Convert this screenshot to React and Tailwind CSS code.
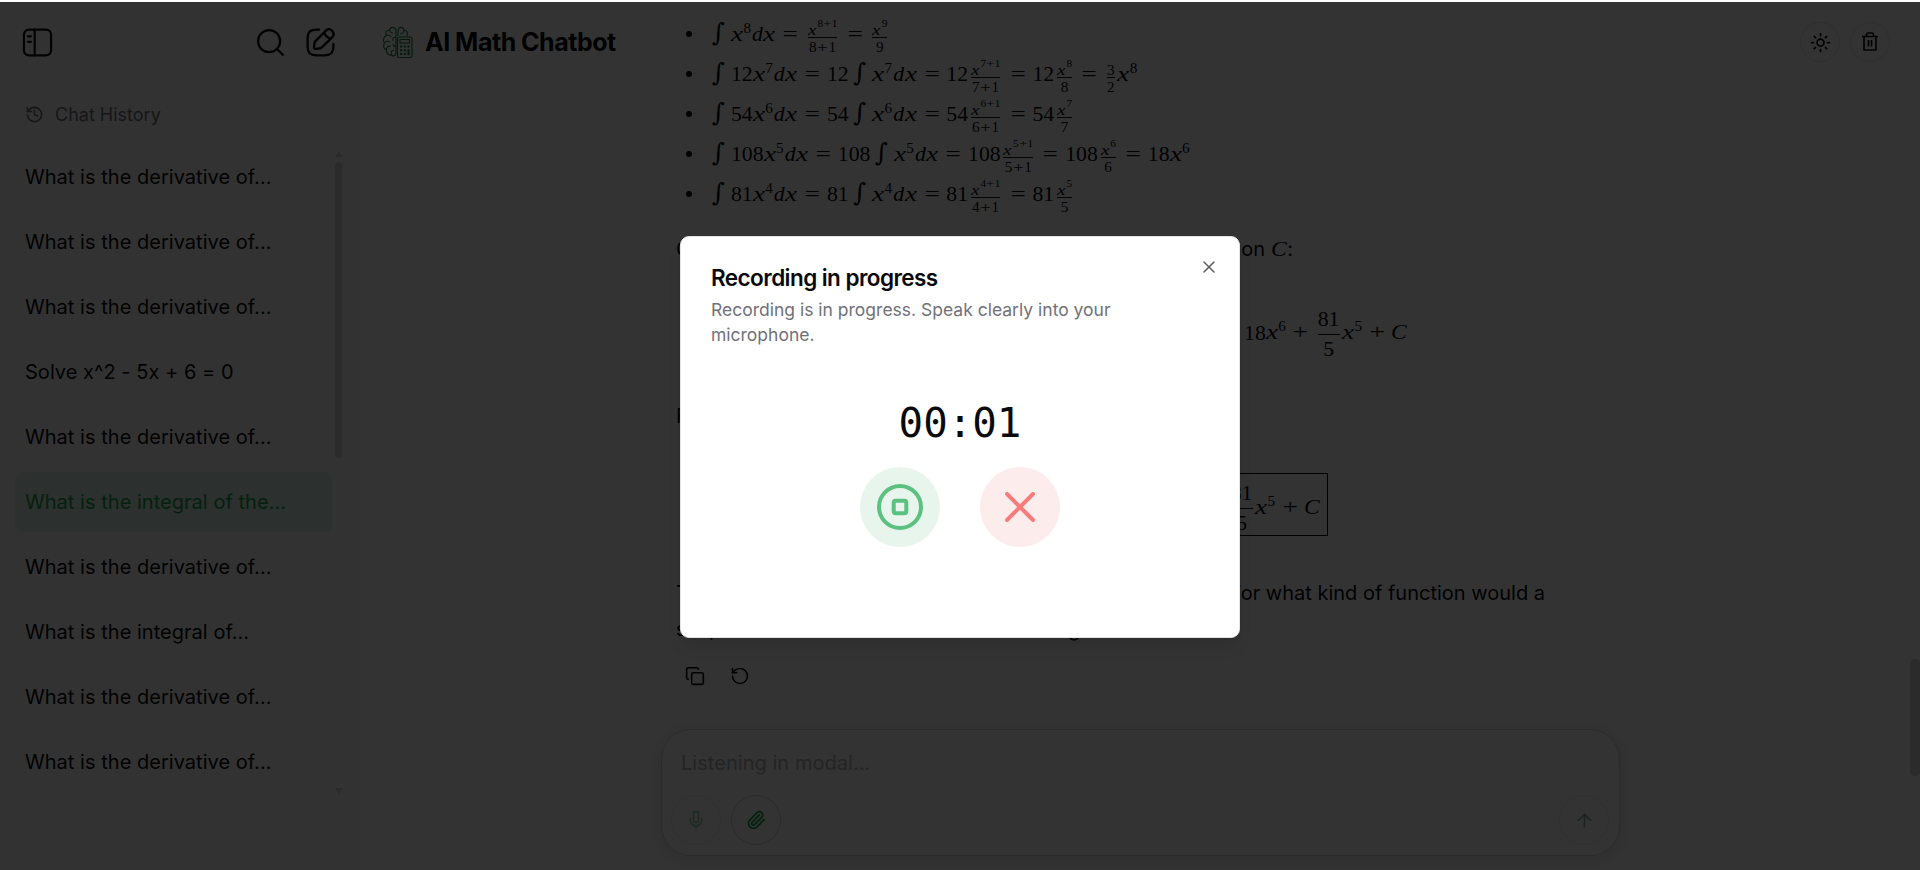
import { useState } from "react";
import { Search, History, Sun, Copy, RotateCcw, Mic, Paperclip, ArrowUp, X } from "lucide-react";

const chats = [
  "What is the derivative of...",
  "What is the derivative of...",
  "What is the derivative of...",
  "Solve x^2 - 5x + 6 = 0",
  "What is the derivative of...",
  "What is the integral of the...",
  "What is the derivative of...",
  "What is the integral of...",
  "What is the derivative of...",
  "What is the derivative of...",
];

function V({ c }) {
  return <i className={c === "x" ? "inline-block w-[0.5715em] origin-left scale-x-[1.25]" : c === "C" ? "inline-block w-[0.76em] origin-left scale-x-[1.08]" : "inline-block w-[0.52em]"}>{c}</i>;
}
function Int() {
  return <span className="inline-block w-[0.87em] text-left font-['DejaVu_Serif'] leading-[0] italic"><span className="inline-block text-[1.15em]">∫</span></span>;
}
function Sup({ children }) {
  return <span className="inline-block pr-[0.07em] align-[0.5em] text-[0.7em] leading-[0]">{children}</span>;
}
function Op({ children }) {
  return <span className="mx-[0.2778em] inline-block w-[0.79em] text-center"><span className="inline-block scale-x-[1.25]">{children}</span></span>;
}
function Sum({ p }) {
  return <>{p}<span className="inline-block w-[0.778em] text-center"><span className="inline-block scale-x-[1.25]">+</span></span>1</>;
}
function Frac({ sup, d, n }) {
  return (
    <span className="mx-[0.18em] inline-flex flex-col items-center align-[0.385em] text-[0.7em] leading-[12px]">
      <span className="flex h-[14px] items-end">
        {n ?? <><V c="x" /><span className="mb-[7px] pl-[0.08em] text-[0.74em] leading-[12px]">{sup}</span></>}
      </span>
      <span className="mt-[1px] h-px w-full bg-[#111]" />
      <span className="mt-px h-[13px] leading-[15px]">{d}</span>
    </span>
  );
}
function DFrac({ n, d }) {
  return (
    <span className="mx-[0.12em] inline-flex h-[56px] flex-col items-center align-[13.5px] leading-[24px]">
      <span className="h-[27px]">{n}</span>
      <span className="h-px w-full bg-[#111]" />
      <span className="h-[28px] leading-[28px]">{d}</span>
    </span>
  );
}
function Dx({ p }) {
  return <><V c="x" /><Sup>{p}</Sup><V c="d" /><V c="x" /></>;
}
function Step({ c, p }) {
  const q = `${p + 1}`;
  return (
    <>
      <Int />{c}<Dx p={p} /><Op>=</Op>
      {c && <>{c}<span className="inline-block w-[0.21em]" /><Int /><Dx p={p} /><Op>=</Op></>}
      {c}<Frac sup={<Sum p={p} />} d={<Sum p={p} />} /><Op>=</Op>{c}<Frac sup={q} d={q} />
      {c === "12" && <><Op>=</Op><Frac n="3" d="2" /><V c="x" /><Sup>8</Sup></>}
    </>
  );
}
function Tail() {
  return <><DFrac n="81" d="5" /><V c="x" /><Sup>5</Sup><span className="-ml-[0.05em]" /><Op>+</Op><V c="C" /></>;
}

const steps = [
  { c: "", p: 8 }, { c: "12", p: 7 }, { c: "54", p: 6 }, { c: "108", p: 5 }, { c: "81", p: 4 },
];

function Logo() {
  return (
    <svg width="32" height="34" viewBox="0 0 32 34" fill="none" stroke="#15803d" strokeWidth="1.1">
      <path d="M14 5C13 1.500 8 1.500 7.500 5C4 5 3 8 4.500 10.500C1 12 0.500 16 2.500 18C0.500 21 2 24 4.500 25C4 29 8 30.500 9.500 30C12 32 14 30 14 28ZM16 11V5C17 1.500 21 1.500 22 5C25 5 26 8 25 11M7.500 5Q8 8 11 8M4.500 10.500Q7 9 9 12M2.500 18Q4 15 8 17M4.500 25Q4 21 9 21M9.500 30Q8 26 12 25M14 12Q10 12 11 16M14 22Q11 21 11 19M22 5Q22 8 18 9" />
      <rect x="15.500" y="12" width="14.500" height="20.500" rx="1.500" />
      <rect x="18" y="14.500" width="9.500" height="3.500" />
      <path d="M18 21.500h2.200M21.700 21.500h2.200M25.400 21.500h2.200M18 25.200h2.200M21.700 25.200h2.200M26.500 24.200v6M18 29h2.200M21.700 29h2.200" strokeWidth="2.100" />
    </svg>
  );
}

function Sidebar() {
  return (
    <aside className="flex w-[360px] shrink-0 flex-col bg-[#fafafa]">
      <div className="flex h-[80px] items-center justify-between pl-[22px] pr-[24px]">
        <svg width="31" height="31" viewBox="0 0 24 24" fill="none" stroke="#0a0a0a" strokeWidth="1.700">
          <rect x="1.500" y="2" width="21" height="20" rx="4" />
          <path d="M9.800 2v20M4.700 7.200h2.200M4.700 11.500h2.200" strokeLinecap="round" />
        </svg>
        <div className="flex items-center gap-[18px]">
          <Search size={33} strokeWidth={1.6} />
          <svg width="31" height="31" viewBox="0 0 24 24" fill="none" stroke="#0a0a0a" strokeWidth="1.800" strokeLinecap="round" strokeLinejoin="round">
            <path d="M11 2H9C4 2 2 4 2 9v6c0 5 2 7 7 7h6c5 0 7-2 7-7v-2" />
            <path d="m16 3-7.900 7.900c-.3.300-.6.900-.66 1.300l-.43 3c-.16 1.100.6 1.850 1.700 1.700l3-.43c.4-.06 1-.36 1.300-.66L21 8c1.360-1.360 2-2.940 0-5s-3.600-1.400-5 0ZM14.900 4.200a7.150 7.150 0 0 0 4.900 4.900" />
          </svg>
        </div>
      </div>
      <div className="flex h-[65px] items-center gap-[11px] pl-[25px] text-[18px] text-[#71717a]">
        <History size={19} />Chat History
      </div>
      <div className="flex justify-between pl-[15px] pr-[18px]">
        <ul className="flex w-[317px] flex-col gap-[5px]">
          {chats.map((t, i) => (
            <li key={i} className={i === 5 ? "flex h-[60px] items-center rounded-[8px] bg-[#daf0e6] pl-[10px] text-[20px] tracking-[0.03px] text-[#16a34a]" : "flex h-[60px] items-center pl-[10px] text-[20px] tracking-[0.03px]"}>{t}</li>
          ))}
        </ul>
        <div className="flex h-[647px] w-[7px] flex-col items-center pt-[4px]">
          <svg width="8" height="6" viewBox="0 0 8 6" fill="#d4d4d4"><path d="M4 0l4 6H0z" /></svg>
          <span className="mt-[5px] h-[296px] w-[7px] rounded-full bg-[#d4d4d4]" />
          <svg className="mt-auto" width="8" height="6" viewBox="0 0 8 6" fill="#d4d4d4"><path d="M0 0h8L4 6z" /></svg>
        </div>
      </div>
    </aside>
  );
}

function Answer() {
  return (
    <div className="flex w-[900px] flex-col text-[20px]">
      <ul className="flex flex-col font-['Liberation_Serif'] text-[21.780px] leading-[40px]">
        {steps.map((s) => (
          <li key={s.p} className="flex h-10 items-center whitespace-nowrap pl-[10px]">
            <span className="mt-[2px] mr-[20px] size-[6px] rounded-full bg-black" />
            <span className="block h-10 pt-px"><Step {...s} />{s.p === 5 && <><Op>=</Op>18<V c="x" /><Sup>6</Sup></>}</span>
          </li>
        ))}
      </ul>
      <div className="mt-[18px] flex h-[36px] items-center justify-between pr-[283px]">
        <p>Combining all of the terms</p>
        <p className="leading-9">constant of integration <span className="font-['Liberation_Serif'] text-[21.780px]"><V c="C" /></span>:</p>
      </div>
      <div className="mt-[32px] flex h-[66px] items-center justify-end whitespace-nowrap pr-[168px] pt-[5px] font-['Liberation_Serif'] text-[21.780px]">
        <span>18<V c="x" /><Sup>6</Sup><span className="-ml-[0.05em]" /><Op>+</Op><Tail /></span>
      </div>
      <p className="mt-[33px] h-[36px] leading-9">Final answer:</p>
      <div className="mt-[39px] flex justify-center">
        <div className="flex h-[63px] w-[404px] items-center justify-end whitespace-nowrap border border-black pr-[6px] pt-[9px] font-['Liberation_Serif'] text-[21.780px]"><span><Tail /></span></div>
      </div>
      <p className="mt-[39px] flex justify-between pr-[31px] leading-9"><span>This integral is solved.</span><span>For what kind of function would a</span></p>
      <p className="leading-9">simple antiderivative rule will not be the right</p>
      <div className="mt-[19px] flex gap-[25px] pl-[9px]">
        <Copy size={20} strokeWidth={1.9} /><RotateCcw size={20} strokeWidth={1.9} />
      </div>
    </div>
  );
}

function Composer() {
  return (
    <div className="flex h-[127px] w-[959px] flex-col justify-between rounded-[30px] border border-[#d4d4d8] bg-white pb-[10px] pl-[9px] pr-[10px] pt-[21px] shadow-[0_3px_18px_rgba(0,0,0,0.13)]">
      <p className="pl-[10px] text-[20px] leading-6 tracking-[0.04px] text-[#b4b4b8]">Listening in modal...</p>
      <div className="flex items-center gap-[10px]">
        <span className="flex size-[50px] items-center justify-center rounded-full border border-[#e8e8ea] text-[#8ad1a4]"><Mic size={20} /></span>
        <span className="flex size-[50px] items-center justify-center rounded-full border border-[#d0d0d4] text-[#16a34a]"><Paperclip size={20} strokeWidth={2.2} /></span>
        <span className="ml-auto flex size-[50px] items-center justify-center rounded-full border border-[#e8e8ea] text-[#8ab89c]"><ArrowUp size={21} /></span>
      </div>
    </div>
  );
}

function Modal({ onClose }) {
  return (
    <div className="absolute inset-x-0 bottom-0 top-[2px] flex justify-center bg-black/80 pt-[234px]">
      <div className="flex h-[402px] w-[560px] flex-col rounded-[9px] border border-[#e4e4e7] bg-white px-[30px] pt-[29px] shadow-lg">
        <div className="flex h-[83px] justify-between">
          <div className="w-[440px]">
            <h2 className="text-[22.500px] font-semibold leading-[24px] tracking-[-0.56px] text-[#09090b]">Recording in progress</h2>
            <p className="mt-[7px] text-[17.500px] leading-[25px] text-[#71717a]">Recording is in progress. Speak clearly into your microphone.</p>
          </div>
          <button onClick={onClose} className="-mr-[10px] -mt-[9px] flex size-5 items-center justify-center text-[#5a5a5c]"><X size={20} strokeWidth={1.7} /></button>
        </div>
        <div className="mt-[46px] flex flex-col items-center">
          <div className="h-[56px] font-['DejaVu_Sans_Mono'] text-[40.800px] leading-[56px] text-[#09090b]">00:01</div>
          <div className="mt-[16px] flex gap-[40px]">
            <span className="flex size-20 items-center justify-center rounded-full bg-[#e8f5ec]">
              <svg width="46" height="46" viewBox="0 0 46 46" fill="none" stroke="#5cc180" strokeWidth="4"><circle cx="23" cy="23" r="21" /><rect x="16.700" y="16.700" width="12.600" height="12.600" rx="2" /></svg>
            </span>
            <span className="flex size-20 items-center justify-center rounded-full bg-[#fdecec]">
              <svg width="30" height="30" viewBox="0 0 30 30" fill="none" stroke="#f87c7c" strokeWidth="4" strokeLinecap="round"><path d="M2 2l26 26M28 2L2 28" /></svg>
            </span>
          </div>
        </div>
      </div>
    </div>
  );
}

export default function App() {
  const [open, setOpen] = useState(true);
  return (
    <div className="relative flex h-[870px] w-[1920px] overflow-hidden bg-white pt-[2px] font-['Inter',sans-serif] text-[#09090b]">
      <Sidebar />
      <main className="flex min-w-0 flex-1">
        <div className="flex w-[300px] items-start gap-[11px] pl-[22px] pt-[23px]">
          <Logo />
          <h1 className="whitespace-nowrap text-[25px] font-bold leading-[34px] tracking-[-0.5px]">AI Math Chatbot</h1>
        </div>
        <div className="flex flex-1 flex-col pl-[16px] pt-[11px]">
          <Answer />
          <div className="-ml-[15px] mt-[43px]"><Composer /></div>
        </div>
        <div className="flex w-[120px] flex-col items-end">
          <div className="flex gap-[10px] pr-[30px] pt-[20px]">
            <span className="flex size-10 items-center justify-center rounded-full border border-[#e4e4e7]"><Sun size={21} /></span>
            <span className="flex size-10 items-center justify-center rounded-full border border-[#e4e4e7]">
              <svg width="18" height="20" viewBox="0 0 18 20" fill="none" stroke="currentColor" strokeWidth="1.600" strokeLinejoin="round"><path d="M1 4.500h16M3 4.500V18h12V4.500M5.500 4V2.500Q5.500 1 7 1h4q1.500 0 1.500 1.500V4M7.500 8v6.500M10.500 8v6.500" /></svg>
            </span>
          </div>
          <span className="mt-[597px] h-[117px] w-[10px] rounded-full bg-[#d4d4d4]" />
        </div>
      </main>
      {open && <Modal onClose={() => setOpen(false)} />}
    </div>
  );
}
